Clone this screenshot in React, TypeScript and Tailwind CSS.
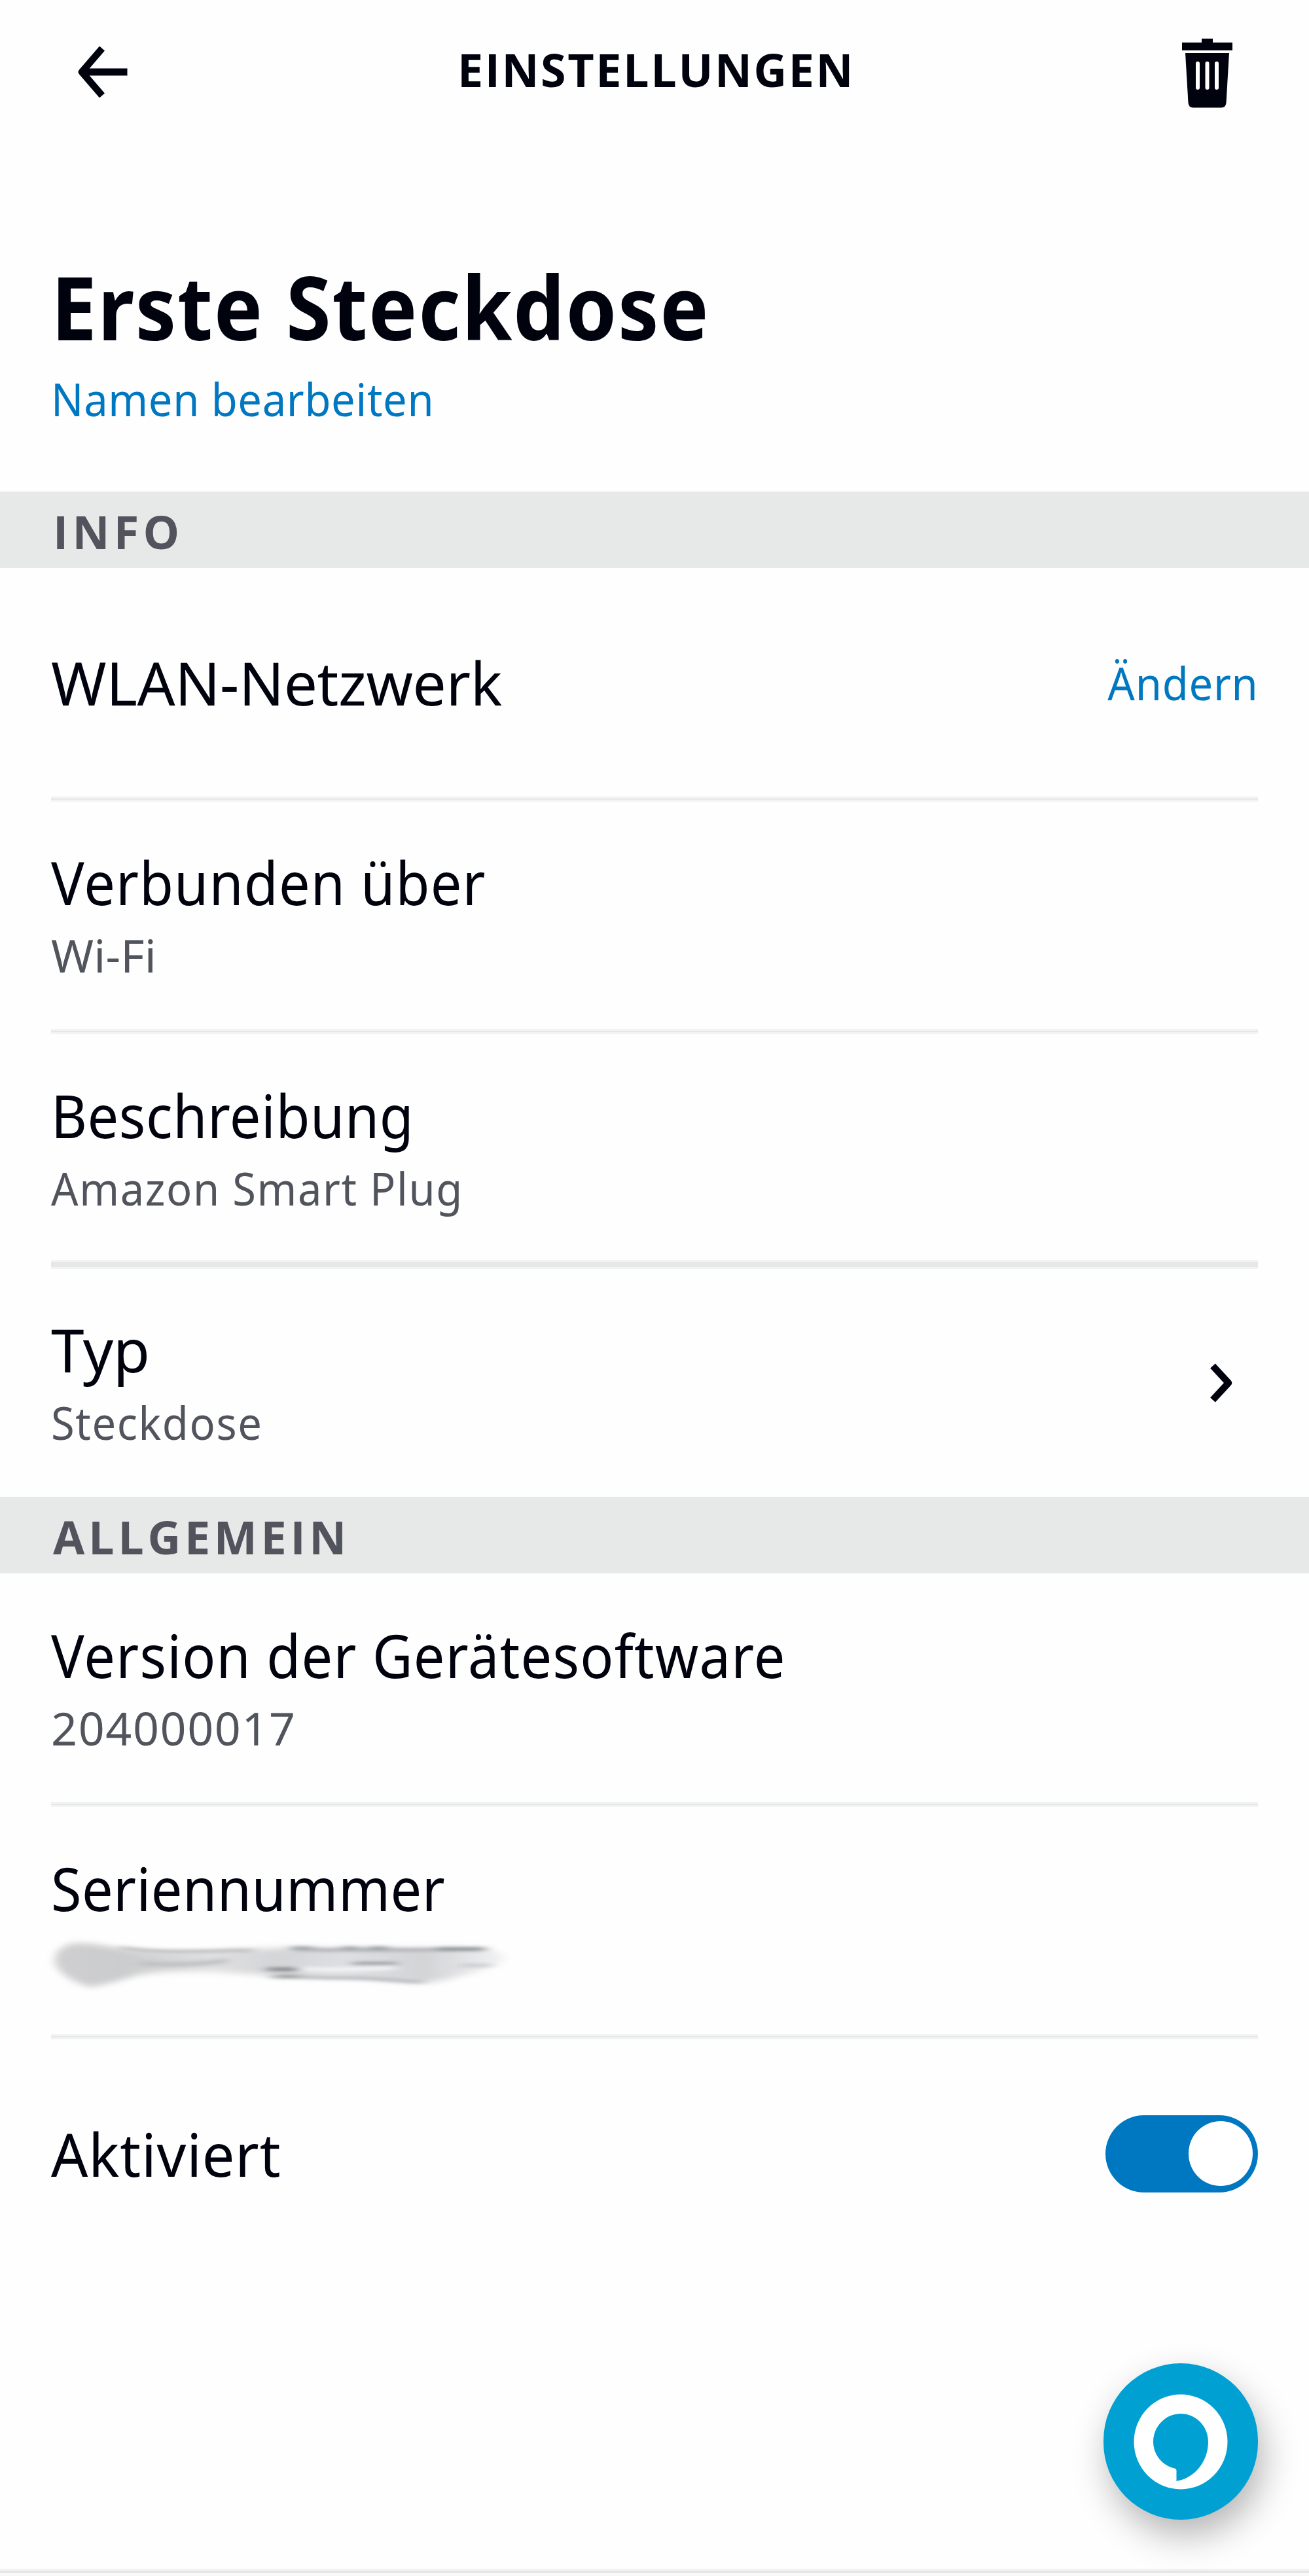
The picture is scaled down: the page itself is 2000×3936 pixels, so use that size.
import { useState } from "react";
import type { ReactNode } from "react";
import { clsx } from "clsx";

function BackIcon() {
  return (
    <svg viewBox="0 0 77 80" className="h-[80px] w-[77px]" fill="none" stroke="#00020d">
      <path d="M38 4 L7 40 L38 76" strokeWidth="10.5" strokeLinejoin="round" />
      <path d="M7 40 H76.5" strokeWidth="11" />
    </svg>
  );
}

function TrashIcon() {
  return (
    <svg viewBox="0 0 77 108" className="mt-1 h-[108px] w-[77px]" fill="#00020d">
      <path d="M30 1 H47 V7 H77 V19 H0 V7 H30 Z" />
      <path d="M5 23 H72 L67.5 99 Q66.8 106.5 60 106.5 H17 Q10.2 106.5 9.5 99 Z" />
      <path d="M24 39 V76 M38.5 39 V76 M53 39 V76" stroke="#fff" strokeWidth="6" strokeLinecap="round" />
    </svg>
  );
}

function ChevronIcon() {
  return (
    <svg viewBox="0 0 36 64" className="mr-[38px] mt-[8px] h-[64px] w-[36px]" fill="none" stroke="#00020d">
      <path d="M5 6 L29 32 L5 58" strokeWidth="10.5" strokeLinejoin="round" />
    </svg>
  );
}

function AlexaIcon() {
  return (
    <svg viewBox="0 0 144 146" className="h-[146px] w-[144px]">
      <ellipse cx="72" cy="73" rx="71.5" ry="72.5" fill="#fff" />
      <path
        d="M72 30 C95 30 114 49 114 73 C114 104 92 129 65.5 133 V117 C65.5 115 64.5 114 62.5 113.5 C43 109 30 92 30 73 C30 49 49 30 72 30 Z"
        fill="#00a0d2"
      />
    </svg>
  );
}

// Smeared-out serial number
function RedactedValue() {
  return (
    <svg viewBox="70 2950 740 100" className="-ml-2 mt-[10px] h-[100px] w-[740px]" fill="none">
      <defs>
        <filter id="soft" x="-10%" y="-30%" width="120%" height="160%">
          <feGaussianBlur stdDeviation="7 5" />
        </filter>
        <filter id="streak" x="-10%" y="-200%" width="120%" height="500%">
          <feGaussianBlur stdDeviation="9 2.5" />
        </filter>
        <linearGradient id="smear" x1="0" x2="1" y1="0" y2="0">
          <stop offset="0" stopColor="#cfcfd1" />
          <stop offset="0.15" stopColor="#cbcccd" />
          <stop offset="0.35" stopColor="#dfdfe1" />
          <stop offset="0.5" stopColor="#d4d5d7" />
          <stop offset="0.65" stopColor="#dedfe2" />
          <stop offset="0.82" stopColor="#d3d4d6" />
          <stop offset="1" stopColor="#f2f2f4" />
        </linearGradient>
      </defs>
      <path
        filter="url(#soft)"
        fill="url(#smear)"
        d="M84 2998 C82 2980 98 2968 120 2968 C150 2967 178 2977 205 2979 C270 2984 320 2980 380 2977 L446 2975 L743 2976 C760 2979 780 2990 768 2996 C750 3003 735 3011 715 3015 C690 3022 665 3029 638 3028 C590 3027 560 3022 510 3020 C450 3019 420 3018 360 3014 C320 3011 280 3010 230 3014 C200 3017 170 3031 140 3035 C118 3032 88 3014 84 2998 Z"
      />
      <g filter="url(#streak)" strokeWidth="5" strokeLinecap="round">
        <path d="M185 2975 C240 2984 300 2980 385 2979" stroke="#b9bbbe" />
        <path d="M215 2999 C260 3002 310 3000 345 2995" stroke="#c0c1c3" strokeWidth="7" />
        <path d="M448 2976 H475 M525 2976 H545 M565 2976 H590" stroke="#7c7f84" />
        <path d="M455 2978 C540 2979 640 2979 738 2977" stroke="#acaeb2" />
        <path d="M670 2977 H738" stroke="#82858a" />
        <path d="M410 3008 H455" stroke="#7a7d81" />
        <path d="M415 3019 C450 3018 470 3021 530 3021 C580 3021 610 3026 645 3027" stroke="#b6b8bb" />
        <path d="M425 3019 H455" stroke="#94969a" />
        <path d="M540 2999 H605" stroke="#8e9195" strokeWidth="4" />
        <path d="M460 3007 C500 3011 560 3007 600 3006" stroke="#f4f4f6" strokeWidth="6" />
        <path d="M705 3002 H750" stroke="#c2c4c7" strokeWidth="4" />
      </g>
    </svg>
  );
}

function Divider({ thick }: { thick?: boolean }) {
  return (
    <div
      className={clsx(
        "mx-[78px] border-y-[3px] border-[#f2f3f3] bg-[#e6e8e7]",
        thick ? "h-[14px]" : "h-[8px]",
      )}
    />
  );
}

function SectionHeader({ title, className }: { title: string; className?: string }) {
  return (
    <h2
      className={clsx(
        "flex h-[117px] items-center bg-[#e7e9e8] pl-[81px] pt-1 font-['Open_Sans',sans-serif] text-[70px] font-bold leading-none text-[#51545c]",
        className,
      )}
    >
      {title}
    </h2>
  );
}

type RowProps = {
  label: string;
  labelClass: string;
  value?: string;
  valueClass?: string;
  className: string;
  action?: ReactNode;
  children?: ReactNode;
};

function Row({ label, labelClass, value, valueClass, className, action, children }: RowProps) {
  return (
    <div className={clsx("flex items-center justify-between px-[78px]", className)}>
      <div>
        <div className={clsx("origin-left whitespace-nowrap text-[91px] leading-[112px]", labelClass)}>{label}</div>
        {value && (
          <div className={clsx("mt-[15px] origin-left text-[70px] leading-[80px] text-[#51545c]", valueClass)}>
            {value}
          </div>
        )}
        {children}
      </div>
      {action}
    </div>
  );
}

export default function App() {
  const [enabled, setEnabled] = useState(true);

  return (
    <div className="relative flex h-[3936px] w-[2000px] flex-col overflow-hidden bg-[#fefefe] font-['Noto_Sans',sans-serif] text-[#00020d]">
      <header className="flex h-[220px] shrink-0 items-center justify-between pl-[118px] pr-[117px]">
        <button aria-label="Zurück">
          <BackIcon />
        </button>
        <h1 className="ml-1 pb-2 font-['Open_Sans',sans-serif] text-[70px] font-bold leading-none tracking-[2.6px]">
          EINSTELLUNGEN
        </h1>
        <button aria-label="Löschen">
          <TrashIcon />
        </button>
      </header>

      <div className="h-[531px] pl-[78px] pt-[168px]">
        <div className="origin-left scale-x-93 text-[134px] font-bold leading-[160px] tracking-[1.8px]">
          Erste Steckdose
        </div>
        <button className="mt-[13px] block origin-left scale-x-93 text-[70px] leading-[96px] tracking-[0.7px] text-[#0077c1]">
          Namen bearbeiten
        </button>
      </div>

      <SectionHeader title="INFO" className="tracking-[6.3px]" />
      <Row
        label="WLAN-Netzwerk"
        labelClass="tracking-[-0.4px]"
        className="h-[349px]"
        action={
          <button className="origin-right scale-x-93 text-[70px] leading-none tracking-[0.8px] text-[#0077c1]">
            Ändern
          </button>
        }
      />
      <Divider />
      <Row
        label="Verbunden über"
        labelClass="scale-x-93 tracking-[1.15px]"
        value="Wi-Fi"
        valueClass="tracking-[0.2px]"
        className="h-[347px] pb-1.5"
      />
      <Divider />
      <Row
        label="Beschreibung"
        labelClass="scale-x-93 tracking-[0.6px]"
        value="Amazon Smart Plug"
        valueClass="scale-x-93 tracking-[1.7px]"
        className="h-[345px] pb-0.5"
      />
      <Divider thick />
      <Row
        label="Typ"
        labelClass="tracking-[-0.1px]"
        value="Steckdose"
        valueClass="scale-x-93 tracking-[1.7px]"
        className="h-[348px] pb-2"
        action={<ChevronIcon />}
      />

      <SectionHeader title="ALLGEMEIN" className="tracking-[5.7px]" />
      <Row
        label="Version der Gerätesoftware"
        labelClass="scale-x-93 tracking-[1.3px]"
        value="204000017"
        valueClass="tracking-[1.6px]"
        className="h-[349px] pb-1"
      />
      <Divider />
      <Row label="Seriennummer" labelClass="scale-x-93 tracking-[0.5px]" className="h-[347px] pt-[10px]">
        <RedactedValue />
      </Row>
      <Divider />
      <Row
        label="Aktiviert"
        labelClass="scale-x-97 tracking-[0.85px]"
        className="h-[349px]"
        action={
          <button
            role="switch"
            aria-checked={enabled}
            aria-label="Aktiviert"
            onClick={() => setEnabled(!enabled)}
            className={clsx(
              "flex h-[118px] w-[233px] items-center rounded-full px-[8px]",
              enabled ? "justify-end bg-[#0077c1]" : "justify-start bg-[#a0a4a8]",
            )}
          >
            <span className="h-[99px] w-[98px] rounded-full bg-white" />
          </button>
        }
      />

      <button
        aria-label="Alexa"
        className="absolute bottom-[86px] right-[78px] flex h-[239px] w-[236px] items-center justify-center rounded-full bg-[#00a0d2] shadow-[8px_24px_54px_rgba(0,0,0,0.29)]"
      >
        <AlexaIcon />
      </button>

      <div className="mt-auto h-[11px] shrink-0 border-t-[3px] border-[#f1f1f1] bg-[#f7f9fb]">
        <div className="h-[3px] bg-[#e2e4e6]" />
      </div>
    </div>
  );
}
